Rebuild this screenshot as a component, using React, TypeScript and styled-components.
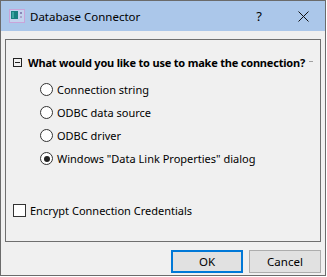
import React from "react";
import styled, { createGlobalStyle } from "styled-components";

const GlobalStyle = createGlobalStyle`
  html, body {
    margin: 0;
    padding: 0;
    background: #ffffff;
  }
  body {
    font-family: "Noto Sans", "Open Sans", sans-serif;
    font-size: 11px;
    color: #000;
  }
`;

const Window = styled.div`
  width: 326px;
  height: 276px;
  box-sizing: border-box;
  border: 1px solid #6b6b6b;
  background: #f0f0f0;
  display: flex;
  flex-direction: column;
`;

const TitleBar = styled.div`
  height: 30px;
  background: #abc7ea;
  display: flex;
  align-items: center;
  padding-left: 8px;
`;

const AppIcon = styled.svg`
  width: 16px;
  height: 14px;
  margin-right: 5px;
  flex: none;
`;

const Title = styled.div`
  flex: 1;
  font-size: 11.5px;
  line-height: 16px;
  margin-top: 1px;
`;

const TitleButton = styled.div`
  width: 44px;
  height: 30px;
  display: flex;
  align-items: center;
  justify-content: center;
  font-size: 13px;
`;

const Body = styled.div`
  flex: 1;
  display: flex;
  flex-direction: column;
  padding: 8px 4px 0 4px;
`;

const GroupBox = styled.div`
  height: 203px;
  box-sizing: border-box;
  border: 1px solid #6f6f6f;
  padding: 16px 0 0 7px;
  display: flex;
  flex-direction: column;
`;

const Heading = styled.div`
  display: flex;
  align-items: center;
  height: 12px;
  font-weight: 700;
  letter-spacing: -0.2px;
  white-space: nowrap;
`;

const Expander = styled.span`
  width: 9px;
  height: 9px;
  box-sizing: border-box;
  border: 1px solid #222;
  margin-right: 6px;
  display: flex;
  align-items: center;
  justify-content: center;
  &::after {
    content: "";
    width: 5px;
    height: 1px;
    background: #222;
  }
`;

const HeadingRule = styled.span`
  width: 4px;
  height: 1px;
  background: #a0a0a0;
  margin-left: 4px;
  margin-top: -2px;
`;

const Options = styled.div`
  display: flex;
  flex-direction: column;
  padding: 10px 0 0 27px;
`;

const Row = styled.label`
  display: flex;
  align-items: center;
  height: 23px;
  white-space: nowrap;
`;

const Radio = styled.span<{ $checked?: boolean }>`
  width: 13px;
  height: 13px;
  box-sizing: border-box;
  border: 1px solid #333;
  border-radius: 50%;
  background: #fff;
  margin-right: 4px;
  display: flex;
  align-items: center;
  justify-content: center;
  &::after {
    content: "";
    width: 6px;
    height: 6px;
    border-radius: 50%;
    background: ${(p) => (p.$checked ? "#222" : "transparent")};
  }
`;

const CheckRow = styled(Row)`
  margin-top: 29px;
`;

const Check = styled.span`
  width: 13px;
  height: 13px;
  box-sizing: border-box;
  border: 1px solid #333;
  background: #fff;
  margin-right: 4px;
`;

const Buttons = styled.div`
  display: flex;
  justify-content: flex-end;
  gap: 6px;
  margin-top: 8px;
`;

const Button = styled.button<{ $default?: boolean }>`
  width: 72px;
  height: 23px;
  box-sizing: border-box;
  border: ${(p) => (p.$default ? "2px solid #0078d7" : "1px solid #adadad")};
  background: #e1e1e1;
  font-family: inherit;
  font-size: 11.5px;
  color: #000;
  padding: 0;
`;

const options = [
  { label: "Connection string", checked: false },
  { label: "ODBC data source", checked: false },
  { label: "ODBC driver", checked: false },
  { label: 'Windows "Data Link Properties" dialog', checked: true },
];

export default function App() {
  return (
    <>
      <GlobalStyle />
      <Window>
        <TitleBar>
          <AppIcon viewBox="0 0 16 14">
            <rect x="0.5" y="0.5" width="15" height="13" fill="#c4d3ee" stroke="#c9a4d9" />
            <rect x="2" y="2" width="7" height="8" fill="#17807f" />
            <rect x="3" y="3" width="2" height="6" fill="#3aa6a0" />
            <rect x="11" y="3" width="2" height="2" fill="#8a86b8" />
            <rect x="11" y="7" width="2" height="2" fill="#a8a4cc" />
          </AppIcon>
          <Title>Database Connector</Title>
          <TitleButton>?</TitleButton>
          <TitleButton>
            <svg width="11" height="11" viewBox="0 0 11 11">
              <path d="M0.5 0.5 L10.5 10.5 M10.5 0.5 L0.5 10.5" stroke="#111" strokeWidth="1" />
            </svg>
          </TitleButton>
        </TitleBar>
        <Body>
          <GroupBox>
            <Heading>
              <Expander />
              What would you like to use to make the connection?
              <HeadingRule />
            </Heading>
            <Options>
              {options.map((o) => (
                <Row key={o.label}>
                  <Radio $checked={o.checked} />
                  {o.label}
                </Row>
              ))}
            </Options>
            <CheckRow>
              <Check />
              Encrypt Connection Credentials
            </CheckRow>
          </GroupBox>
          <Buttons>
            <Button $default>OK</Button>
            <Button>Cancel</Button>
          </Buttons>
        </Body>
      </Window>
    </>
  );
}
